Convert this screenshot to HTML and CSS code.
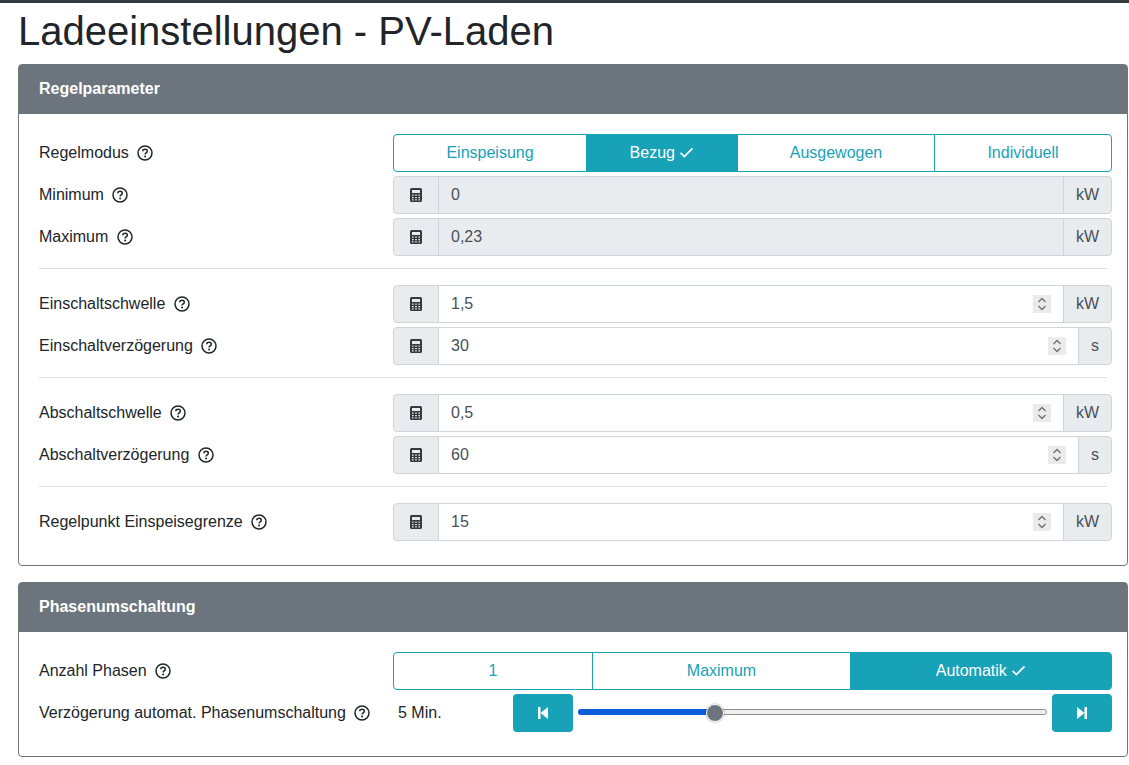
FILE: index.html
```html
<!DOCTYPE html>
<html lang="de">
<head>
<meta charset="utf-8">
<title>Ladeeinstellungen - PV-Laden</title>
<link rel="stylesheet" href="styles.css">
</head>
<body>
<svg class="defs" width="0" height="0" aria-hidden="true">
  <defs>
    <symbol id="help" viewBox="0 0 16 16">
      <circle cx="8" cy="8" r="7" fill="none" stroke="currentColor" stroke-width="1.5"/>
      <path d="M5.8 6.3c0-1.3 1-2 2.3-2s2.2.8 2.2 1.9c0 1.700-2.200 1.700-2.200 3.300" fill="none" stroke="currentColor" stroke-width="1.500"/>
      <circle cx="8.100" cy="11.500" r="1" fill="currentColor"/>
    </symbol>
    <symbol id="calc" viewBox="0 0 12 14">
      <path fill-rule="evenodd" fill="currentColor" d="M1.500 0h9A1.500 1.500 0 0 1 12 1.500v11a1.500 1.500 0 0 1-1.500 1.500h-9A1.500 1.500 0 0 1 0 12.500v-11A1.500 1.500 0 0 1 1.500 0zM2 2v3h8V2zM2 6.500v1.300h1.600V6.500zM5.200 6.500v1.300h1.600V6.500zM8.400 6.500v1.300H10V6.500zM2 9v1.300h1.600V9zM5.200 9v1.300h1.600V9zM8.400 9v1.300H10V9zM2 11.300v1.200h1.600v-1.200zM5.200 11.300v1.200h1.600v-1.200zM8.400 11.300v1.200H10v-1.200z"/>
    </symbol>
    <symbol id="check" viewBox="0 0 16 12">
      <path d="M1.500 6.500l4.200 4L14.500 1.500" fill="none" stroke="currentColor" stroke-width="1.900"/>
    </symbol>
    <symbol id="spin" viewBox="0 0 18 18">
      <path d="M5.500 7L9 3.500 12.500 7M5.500 11L9 14.500 12.500 11" fill="none" stroke="currentColor" stroke-width="1.300"/>
    </symbol>
    <symbol id="first" viewBox="0 0 12 14">
      <path fill="currentColor" d="M1 1h2.500v12H1zM11 1v12L3.500 7z"/>
    </symbol>
    <symbol id="last" viewBox="0 0 12 14">
      <path fill="currentColor" d="M8.500 1H11v12H8.500zM1 1v12l7.500-6z"/>
    </symbol>
  </defs>
</svg>

<main class="page">
  <h1 class="title">Ladeeinstellungen - PV-Laden</h1>

  <section class="card">
    <h2 class="card-head">Regelparameter</h2>
    <div class="card-body">
      <div class="row">
        <div class="label">Regelmodus <svg class="help"><use href="#help"/></svg></div>
        <div class="btn-group modes">
          <button class="seg">Einspeisung</button>
          <button class="seg active">Bezug <svg class="check"><use href="#check"/></svg></button>
          <button class="seg">Ausgewogen</button>
          <button class="seg">Individuell</button>
        </div>
      </div>
      <div class="row">
        <div class="label">Minimum <svg class="help"><use href="#help"/></svg></div>
        <div class="input-group">
          <span class="addon lead"><svg class="calc"><use href="#calc"/></svg></span>
          <div class="field disabled">0</div>
          <span class="addon unit">kW</span>
        </div>
      </div>
      <div class="row">
        <div class="label">Maximum <svg class="help"><use href="#help"/></svg></div>
        <div class="input-group">
          <span class="addon lead"><svg class="calc"><use href="#calc"/></svg></span>
          <div class="field disabled">0,23</div>
          <span class="addon unit">kW</span>
        </div>
      </div>
      <hr class="sep">
      <div class="row">
        <div class="label">Einschaltschwelle <svg class="help"><use href="#help"/></svg></div>
        <div class="input-group">
          <span class="addon lead"><svg class="calc"><use href="#calc"/></svg></span>
          <div class="field">1,5<svg class="spin"><use href="#spin"/></svg></div>
          <span class="addon unit">kW</span>
        </div>
      </div>
      <div class="row">
        <div class="label">Einschaltverzögerung <svg class="help"><use href="#help"/></svg></div>
        <div class="input-group">
          <span class="addon lead"><svg class="calc"><use href="#calc"/></svg></span>
          <div class="field">30<svg class="spin"><use href="#spin"/></svg></div>
          <span class="addon unit">s</span>
        </div>
      </div>
      <hr class="sep">
      <div class="row">
        <div class="label">Abschaltschwelle <svg class="help"><use href="#help"/></svg></div>
        <div class="input-group">
          <span class="addon lead"><svg class="calc"><use href="#calc"/></svg></span>
          <div class="field">0,5<svg class="spin"><use href="#spin"/></svg></div>
          <span class="addon unit">kW</span>
        </div>
      </div>
      <div class="row">
        <div class="label">Abschaltverzögerung <svg class="help"><use href="#help"/></svg></div>
        <div class="input-group">
          <span class="addon lead"><svg class="calc"><use href="#calc"/></svg></span>
          <div class="field">60<svg class="spin"><use href="#spin"/></svg></div>
          <span class="addon unit">s</span>
        </div>
      </div>
      <hr class="sep">
      <div class="row">
        <div class="label">Regelpunkt Einspeisegrenze <svg class="help"><use href="#help"/></svg></div>
        <div class="input-group">
          <span class="addon lead"><svg class="calc"><use href="#calc"/></svg></span>
          <div class="field">15<svg class="spin"><use href="#spin"/></svg></div>
          <span class="addon unit">kW</span>
        </div>
      </div>
    </div>
  </section>

  <section class="card">
    <h2 class="card-head">Phasenumschaltung</h2>
    <div class="card-body">
      <div class="row">
        <div class="label">Anzahl Phasen <svg class="help"><use href="#help"/></svg></div>
        <div class="btn-group phases">
          <button class="seg">1</button>
          <button class="seg">Maximum</button>
          <button class="seg active">Automatik <svg class="check"><use href="#check"/></svg></button>
        </div>
      </div>
      <div class="row">
        <div class="label">Verzögerung automat. Phasenumschaltung <svg class="help"><use href="#help"/></svg></div>
        <div class="range-row">
          <span class="range-value">5 Min.</span>
          <button class="step" aria-label="Zurück"><svg class="step-icon"><use href="#first"/></svg></button>
          <div class="slider">
            <div class="track">
              <div class="fill"></div>
            </div>
            <span class="thumb"></span>
          </div>
          <button class="step" aria-label="Vor"><svg class="step-icon"><use href="#last"/></svg></button>
        </div>
      </div>
    </div>
  </section>
</main>
</body>
</html>
```

FILE: styles.css
```css
* {
  box-sizing: border-box;
}

html,
body {
  height: 765px;
  overflow: hidden;
}

body {
  margin: 0;
  border-top: 3px solid #343a40;
  background: #fff;
  color: #212529;
  font-family: "Liberation Sans", Arial, sans-serif;
  font-size: 16px;
  line-height: 1.5;
}

.defs {
  display: block;
  height: 0;
}

.page {
  padding: 4px 1px 0 18px;
}

.title {
  margin: 0 0 9px;
  font-size: 40px;
  font-weight: 400;
  line-height: 48px;
}

.card {
  margin-bottom: 16px;
  border: 1px solid #6c757d;
  border-radius: 4px;
}

.card-head {
  height: 49px;
  margin: 0;
  padding: 0 20px;
  background: #6c757d;
  color: #fff;
  font-size: 16px;
  font-weight: 700;
  line-height: 48px;
}

.card-body {
  padding: 20px 20px 20px;
}

.row {
  display: grid;
  grid-template-columns: 354px 719px;
  height: 38px;
  margin-right: -4px;
  margin-bottom: 4px;
  align-items: center;
}

.label {
  display: flex;
  align-items: center;
  gap: 4px;
  white-space: pre;
}

.help {
  width: 16px;
  height: 16px;
  flex: none;
}

.btn-group {
  display: grid;
  height: 38px;
}

.modes {
  grid-template-columns: 194px 151px 197px 177px;
}

.phases {
  grid-template-columns: 200px 258px 261px;
}

.seg {
  height: 38px;
  margin: 0 0 0 -1px;
  padding: 0;
  border: 1px solid #17a2b8;
  background: #fff;
  color: #17a2b8;
  font: inherit;
}

.seg:first-child {
  margin-left: 0;
  border-radius: 4px 0 0 4px;
}

.seg:last-child {
  border-radius: 0 4px 4px 0;
}

.seg.active {
  background: #17a2b8;
  color: #fff;
}

.check {
  width: 15px;
  height: 11px;
}

.input-group {
  display: flex;
  height: 38px;
}

.addon {
  display: flex;
  flex: none;
  align-items: center;
  justify-content: center;
  border: 1px solid #ced4da;
  background: #e9ecef;
  color: #495057;
}

.lead {
  width: 46px;
  border-radius: 4px 0 0 4px;
}

.unit {
  margin-left: -1px;
  padding: 0 12px;
  border-radius: 0 4px 4px 0;
}

.calc {
  width: 12px;
  height: 14px;
  color: #343a40;
}

.field {
  display: flex;
  flex: 1;
  align-items: center;
  justify-content: space-between;
  margin-left: -1px;
  padding: 0 12px;
  border: 1px solid #ced4da;
  background: #fff;
  color: #495057;
}

.field.disabled {
  background: #e9ecef;
}

.spin {
  width: 18px;
  height: 18px;
  background: #ebebeb;
  color: #6f6f6f;
}

.range-row {
  display: flex;
  align-items: center;
  height: 38px;
}

.range-value {
  width: 120px;
  padding-left: 5px;
}

.step {
  display: flex;
  flex: none;
  align-items: center;
  justify-content: center;
  width: 60px;
  height: 38px;
  padding: 0;
  border: 0;
  border-radius: 4px;
  background: #17a2b8;
  color: #fff;
}

.step-icon {
  width: 12px;
  height: 14px;
}

.slider {
  position: relative;
  flex: 1;
  height: 38px;
  margin: 0 5px;
}

.track {
  height: 6px;
  margin-top: 15px;
  border: 1px solid #8f8f8f;
  border-radius: 3px;
  background: #efefef;
  overflow: hidden;
}

.slider::before {
  content: "";
  position: absolute;
  top: 15px;
  left: 0;
  width: 137px;
  height: 6px;
  border-radius: 3px;
  background: #0b5ed7;
}

.thumb {
  position: absolute;
  top: 10px;
  left: 128px;
  width: 18px;
  height: 18px;
  border: 1px solid #fff;
  border-radius: 50%;
  background: #6c757d;
  box-shadow: 0 0 2px rgba(0, 0, 0, 0.45);
}

.sep {
  height: 1px;
  margin: 16px 0;
  border: 0;
  background: #dfe1e4;
}

.row + .sep {
  margin-top: 12px;
}
```
